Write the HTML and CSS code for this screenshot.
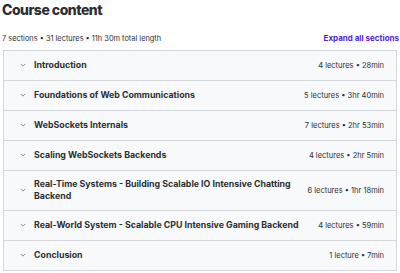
FILE: index.html
```html
<!DOCTYPE html>
<html lang="en">
<head>
	<meta charset="UTF-8">
	<title>Course content</title>
	<link rel="stylesheet" href="styles.css">
</head>
<body>
	<div class="curriculum">
		<h2 class="title">Course content</h2>
		<div class="meta">
			<span>7 sections • 31 lectures • 11h 30m total length</span>
			<a href="##" class="expand">Expand all sections</a>
		</div>
		<!-- 章节列表 -->
		<ul class="sections">
			<li class="section">
				<span class="chev"><svg viewBox="0 0 8 5" width="6" height="4"><path d="M1 1l3 3 3-3" fill="none" stroke="#6a6f73" stroke-width="1"/></svg></span>
				<span class="name">Introduction</span>
				<span class="info">4 lectures • 28min</span>
			</li>
			<li class="section">
				<span class="chev"><svg viewBox="0 0 8 5" width="6" height="4"><path d="M1 1l3 3 3-3" fill="none" stroke="#6a6f73" stroke-width="1"/></svg></span>
				<span class="name">Foundations of Web Communications</span>
				<span class="info">5 lectures • 3hr 40min</span>
			</li>
			<li class="section">
				<span class="chev"><svg viewBox="0 0 8 5" width="6" height="4"><path d="M1 1l3 3 3-3" fill="none" stroke="#6a6f73" stroke-width="1"/></svg></span>
				<span class="name">WebSockets Internals</span>
				<span class="info">7 lectures • 2hr 53min</span>
			</li>
			<li class="section">
				<span class="chev"><svg viewBox="0 0 8 5" width="6" height="4"><path d="M1 1l3 3 3-3" fill="none" stroke="#6a6f73" stroke-width="1"/></svg></span>
				<span class="name">Scaling WebSockets Backends</span>
				<span class="info">4 lectures • 2hr 5min</span>
			</li>
			<li class="section">
				<span class="chev"><svg viewBox="0 0 8 5" width="6" height="4"><path d="M1 1l3 3 3-3" fill="none" stroke="#6a6f73" stroke-width="1"/></svg></span>
				<span class="name">Real-Time Systems - Building Scalable IO Intensive Chatting Backend</span>
				<span class="info">6 lectures • 1hr 18min</span>
			</li>
			<li class="section">
				<span class="chev"><svg viewBox="0 0 8 5" width="6" height="4"><path d="M1 1l3 3 3-3" fill="none" stroke="#6a6f73" stroke-width="1"/></svg></span>
				<span class="name">Real-World System - Scalable CPU Intensive Gaming Backend</span>
				<span class="info">4 lectures • 59min</span>
			</li>
			<li class="section">
				<span class="chev"><svg viewBox="0 0 8 5" width="6" height="4"><path d="M1 1l3 3 3-3" fill="none" stroke="#6a6f73" stroke-width="1"/></svg></span>
				<span class="name">Conclusion</span>
				<span class="info">1 lecture • 7min</span>
			</li>
		</ul>
	</div>
</body>
</html>
```

FILE: styles.css
```css
*{
	margin: 0;
	padding: 0;
	box-sizing: border-box;
}
body{
	font-family: Inter, "Noto Sans", sans-serif;
	color: #2d2f31;
	background: #fff;
}
.curriculum{
	padding: 0 3px 0 3px;
}
/*标题*/
.title{
	font-size: 14px;
	font-weight: 800;
	line-height: 20px;
	letter-spacing: -0.5px;
	margin-left: -1px;
}
.meta{
	display: flex;
	justify-content: space-between;
	align-items: center;
	margin-top: 10px;
	height: 16px;
	font-size: 7.4px;
	color: #2d2f31;
	margin-left: -1px;
}
.expand{
	color: #5624d0;
	font-weight: 700;
	text-decoration: none;
	font-size: 8px;
	margin-right: -2px;
}
/*章节*/
.sections{
	list-style: none;
	margin-top: 4px;
	border: 1px solid #d1d7dc;
	border-bottom: 0;
}
.section{
	display: flex;
	align-items: center;
	min-height: 30px;
	padding: 7px 12px 8px 16px;
	background: #f7f9fa;
	border-bottom: 1px solid #d1d7dc;
}
.chev{
	width: 14px;
	display: flex;
	align-items: center;
}
.name{
	flex: 1;
	font-size: 8.8px;
	font-weight: 700;
	line-height: 12px;
	padding-right: 8px;
}
.info{
	font-size: 7.5px;
	color: #2d2f31;
	white-space: nowrap;
}
```
